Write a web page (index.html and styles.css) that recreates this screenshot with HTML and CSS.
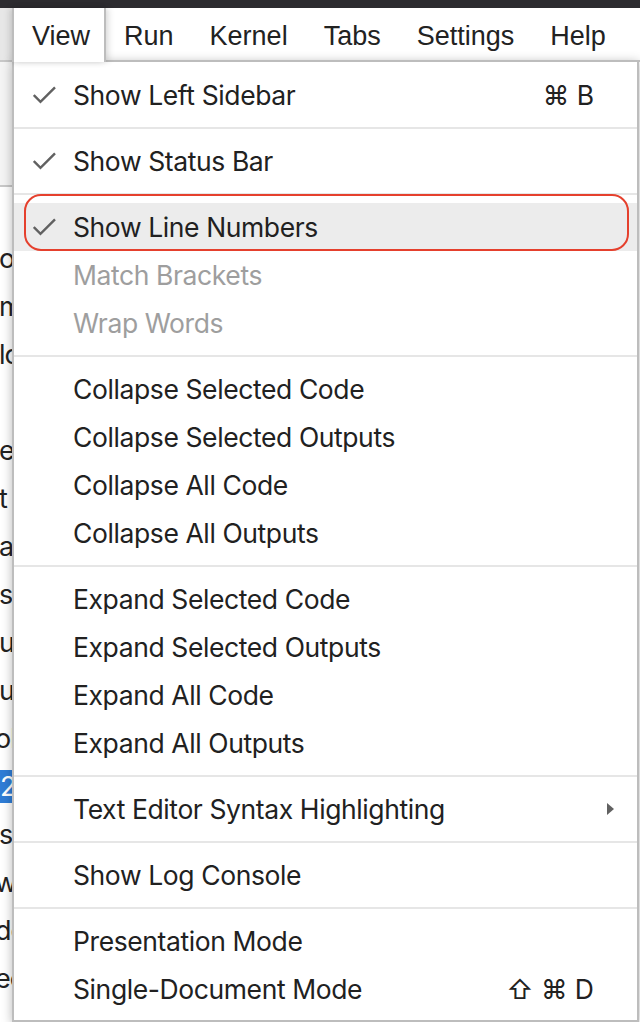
FILE: index.html
```html
<!DOCTYPE html>
<html lang="en">
<head>
<meta charset="utf-8">
<title>View menu</title>
<link rel="stylesheet" href="styles.css">
</head>
<body>
<div class="topbar"></div>
<div class="app">
  <div class="menubar">
    <div class="mb-edge"></div>
    <div class="mb-item active">View</div>
    <div class="mb-item">Run</div>
    <div class="mb-item">Kernel</div>
    <div class="mb-item">Tabs</div>
    <div class="mb-item">Settings</div>
    <div class="mb-item">Help</div>
  </div>
  <div class="workspace">
    <div class="sidebar">
      <div class="sb-head"></div>
      <ul class="files">
        <li></li>
        <li>o</li>
        <li>m</li>
        <li>lc</li>
        <li></li>
        <li>e</li>
        <li>t</li>
        <li>a</li>
        <li>s</li>
        <li>u</li>
        <li>u</li>
        <li class="shift">ol</li>
        <li><span class="sel">2</span></li>
        <li>s</li>
        <li class="shift">wo</li>
        <li class="shift">do</li>
        <li class="shift">ec</li>
        <li></li>
      </ul>
    </div>
  </div>

  <div class="menu">
    <div class="item">
      <span class="icon"><svg viewBox="0 0 24 20" width="24" height="20"><path d="M0.8 11 L7.5 17.8 L22 3.4" /></svg></span>
      <span class="label">Show Left Sidebar</span>
      <span class="kbd">⌘ B</span>
    </div>
    <div class="sep"></div>
    <div class="item">
      <span class="icon"><svg viewBox="0 0 24 20" width="24" height="20"><path d="M0.8 11 L7.5 17.8 L22 3.4" /></svg></span>
      <span class="label">Show Status Bar</span>
    </div>
    <div class="sep"></div>
    <div class="item active">
      <span class="icon"><svg viewBox="0 0 24 20" width="24" height="20"><path d="M0.8 11 L7.5 17.8 L22 3.4" /></svg></span>
      <span class="label">Show Line Numbers</span>
      <span class="ring"></span>
    </div>
    <div class="item disabled"><span class="icon"></span><span class="label">Match Brackets</span></div>
    <div class="item disabled"><span class="icon"></span><span class="label">Wrap Words</span></div>
    <div class="sep"></div>
    <div class="item"><span class="icon"></span><span class="label">Collapse Selected Code</span></div>
    <div class="item"><span class="icon"></span><span class="label">Collapse Selected Outputs</span></div>
    <div class="item"><span class="icon"></span><span class="label">Collapse All Code</span></div>
    <div class="item"><span class="icon"></span><span class="label">Collapse All Outputs</span></div>
    <div class="sep"></div>
    <div class="item"><span class="icon"></span><span class="label">Expand Selected Code</span></div>
    <div class="item"><span class="icon"></span><span class="label">Expand Selected Outputs</span></div>
    <div class="item"><span class="icon"></span><span class="label">Expand All Code</span></div>
    <div class="item"><span class="icon"></span><span class="label">Expand All Outputs</span></div>
    <div class="sep"></div>
    <div class="item">
      <span class="icon"></span>
      <span class="label">Text Editor Syntax Highlighting</span>
      <span class="submenu"><svg viewBox="0 0 7 12" width="7" height="12"><path d="M0 0 L7 6 L0 12 Z" /></svg></span>
    </div>
    <div class="sep"></div>
    <div class="item"><span class="icon"></span><span class="label">Show Log Console</span></div>
    <div class="sep"></div>
    <div class="item"><span class="icon"></span><span class="label">Presentation Mode</span></div>
    <div class="item">
      <span class="icon"></span>
      <span class="label">Single-Document Mode</span>
      <span class="kbd">⇧ ⌘ D</span>
    </div>
  </div>
</div>
</body>
</html>
```
FILE: styles.css
```css
* { box-sizing: border-box; }

html, body {
  margin: 0;
  padding: 0;
}

body {
  width: 640px;
  height: 1022px;
  overflow: hidden;
  background: #ffffff;
  font-family: Inter, "Liberation Sans", "DejaVu Sans", sans-serif;
  color: #212121;
}

.topbar {
  height: 8px;
  background: #2c2b2f;
}

.app {
  position: relative;
  height: 1014px;
}

/* ---------- menu bar ---------- */
.menubar {
  display: flex;
  height: 52px;
  background: #ffffff;
}

.mb-edge {
  width: 12px;
  background: #e7e7e7;
}

.mb-item {
  display: flex;
  align-items: center;
  padding: 5px 18px 0 18px;
  font-family: "Liberation Sans", Arial, sans-serif;
  font-size: 27px;
  color: #222222;
}

.mb-item.active {
  position: relative;
  z-index: 3;
  height: 54px;
  padding: 3px 14px 0 18px;
  background: #ffffff;
  border-left: 2px solid #bdbdbd;
  border-right: 2px solid #bdbdbd;
  box-shadow: -3px 0 6px rgba(0, 0, 0, 0.12), 3px 0 6px rgba(0, 0, 0, 0.12);
}

/* ---------- sidebar behind the menu ---------- */
.workspace {
  display: flex;
  height: 962px;
  border-top: 2px solid #c8c8c8;
}

.sidebar {
  width: 12px;
  overflow: hidden;
  background: #ffffff;
}

.sb-head {
  height: 125px;
  background: #f4f4f4;
  border-bottom: 2px solid #c8c8c8;
}

.files {
  list-style: none;
  margin: 0;
  padding: 0;
}

.files li {
  height: 48px;
  line-height: 48px;
  white-space: nowrap;
  font-size: 27px;
  letter-spacing: -1px;
  color: #222222;
  margin-left: -1px;
}

.files li.shift {
  margin-left: -5px;
}

.files .sel {
  background: #2f7dd6;
  color: #ffffff;
  padding: 0 4px 0 1px;
}

/* ---------- dropdown menu ---------- */
.menu {
  position: absolute;
  top: 52px;
  left: 12px;
  z-index: 2;
  width: 627px;
  border: 2px solid #bdbdbd;
  background: #ffffff;
  padding: 9px 0 7px 0;
  box-shadow: 0 2px 10px rgba(0, 0, 0, 0.28);
}

.item {
  position: relative;
  display: flex;
  align-items: center;
  height: 48px;
  padding: 0 23px 0 19px;
  font-size: 26.5px;
  letter-spacing: -0.4px;
  color: #212121;
  white-space: nowrap;
}

.item.active {
  background: #ececec;
}

.item.disabled {
  color: #9e9e9e;
}

.icon {
  flex: none;
  width: 40px;
  display: flex;
  align-items: center;
}

.icon svg {
  display: block;
  margin-top: -2px;
}

.icon path {
  fill: none;
  stroke: #616161;
  stroke-width: 2.4;
}

.label {
  flex: 1;
}

.kbd {
  margin-right: 20px;
  letter-spacing: 0;
  font-family: Inter, "DejaVu Sans", sans-serif;
}

.submenu {
  display: flex;
  align-items: center;
}

.submenu svg {
  display: block;
  fill: #616161;
}

.ring {
  position: absolute;
  top: -9px;
  bottom: 0;
  left: 10px;
  right: 8px;
  border: 2px solid #e5402d;
  border-radius: 17px;
  pointer-events: none;
}

.sep {
  height: 2px;
  margin: 8px 0;
  background: #e6e6e6;
}
```
